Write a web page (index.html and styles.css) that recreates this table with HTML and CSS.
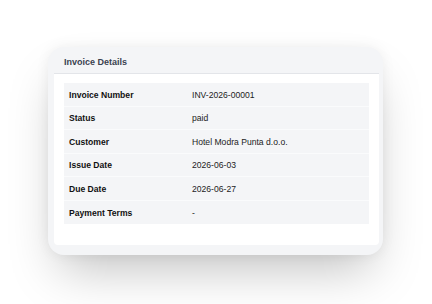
FILE: index.html
```html
<!DOCTYPE html>
<html>
<head>
<meta charset="utf-8">
<link rel="stylesheet" href="styles.css">
</head>
<body>
<div class="frame">
  <div class="header">Invoice Details</div>
  <div class="card">
    <div class="table">
      <div class="row"><div class="label">Invoice Number</div><div class="value">INV-2026-00001</div></div>
      <div class="row"><div class="label">Status</div><div class="value">paid</div></div>
      <div class="row"><div class="label">Customer</div><div class="value">Hotel Modra Punta d.o.o.</div></div>
      <div class="row"><div class="label">Issue Date</div><div class="value">2026-06-03</div></div>
      <div class="row"><div class="label">Due Date</div><div class="value">2026-06-27</div></div>
      <div class="row last"><div class="label">Payment Terms</div><div class="value">-</div></div>
    </div>
  </div>
</div>
</body>
</html>
```
FILE: styles.css
```css
html, body {
  margin: 0;
  padding: 0;
  background: #ffffff;
  font-family: "Liberation Sans", Arial, sans-serif;
}
body {
  min-height: 304px;
  box-sizing: border-box;
  padding: 47px 0 0 48px;
}
.frame {
  width: 335px;
  height: 208px;
  box-sizing: border-box;
  background: #f4f5f7;
  border-radius: 16px;
  box-shadow: 0 25px 50px -12px rgba(0, 0, 0, 0.25), 0 0 14px rgba(0, 0, 0, 0.06);
  display: flex;
  flex-direction: column;
  padding: 0 4px 10px 6px;
}
.header {
  height: 26px;
  display: flex;
  align-items: center;
  padding-left: 10px;
  padding-top: 3px;
  box-sizing: border-box;
  font-size: 9px;
  font-weight: bold;
  color: #3a4250;
}
.card {
  flex: 1;
  background: #ffffff;
  border-top: 1px solid #e3e5e9;
  border-radius: 0 0 4px 4px;
  padding: 9px 10px 0 10px;
}
.table {
  display: flex;
  flex-direction: column;
}
.row {
  display: grid;
  grid-template-columns: 128px 1fr;
  height: 23.5px;
  box-sizing: border-box;
  align-items: center;
  padding-top: 1px;
  background: #f4f5f7;
  border-bottom: 1px solid #fafbfc;
  font-size: 8.6px;
}
.row.last {
  border-bottom: none;
}
.label {
  padding-left: 5px;
  font-weight: bold;
  color: #111111;
}
.value {
  color: #1c1c1c;
}
```
